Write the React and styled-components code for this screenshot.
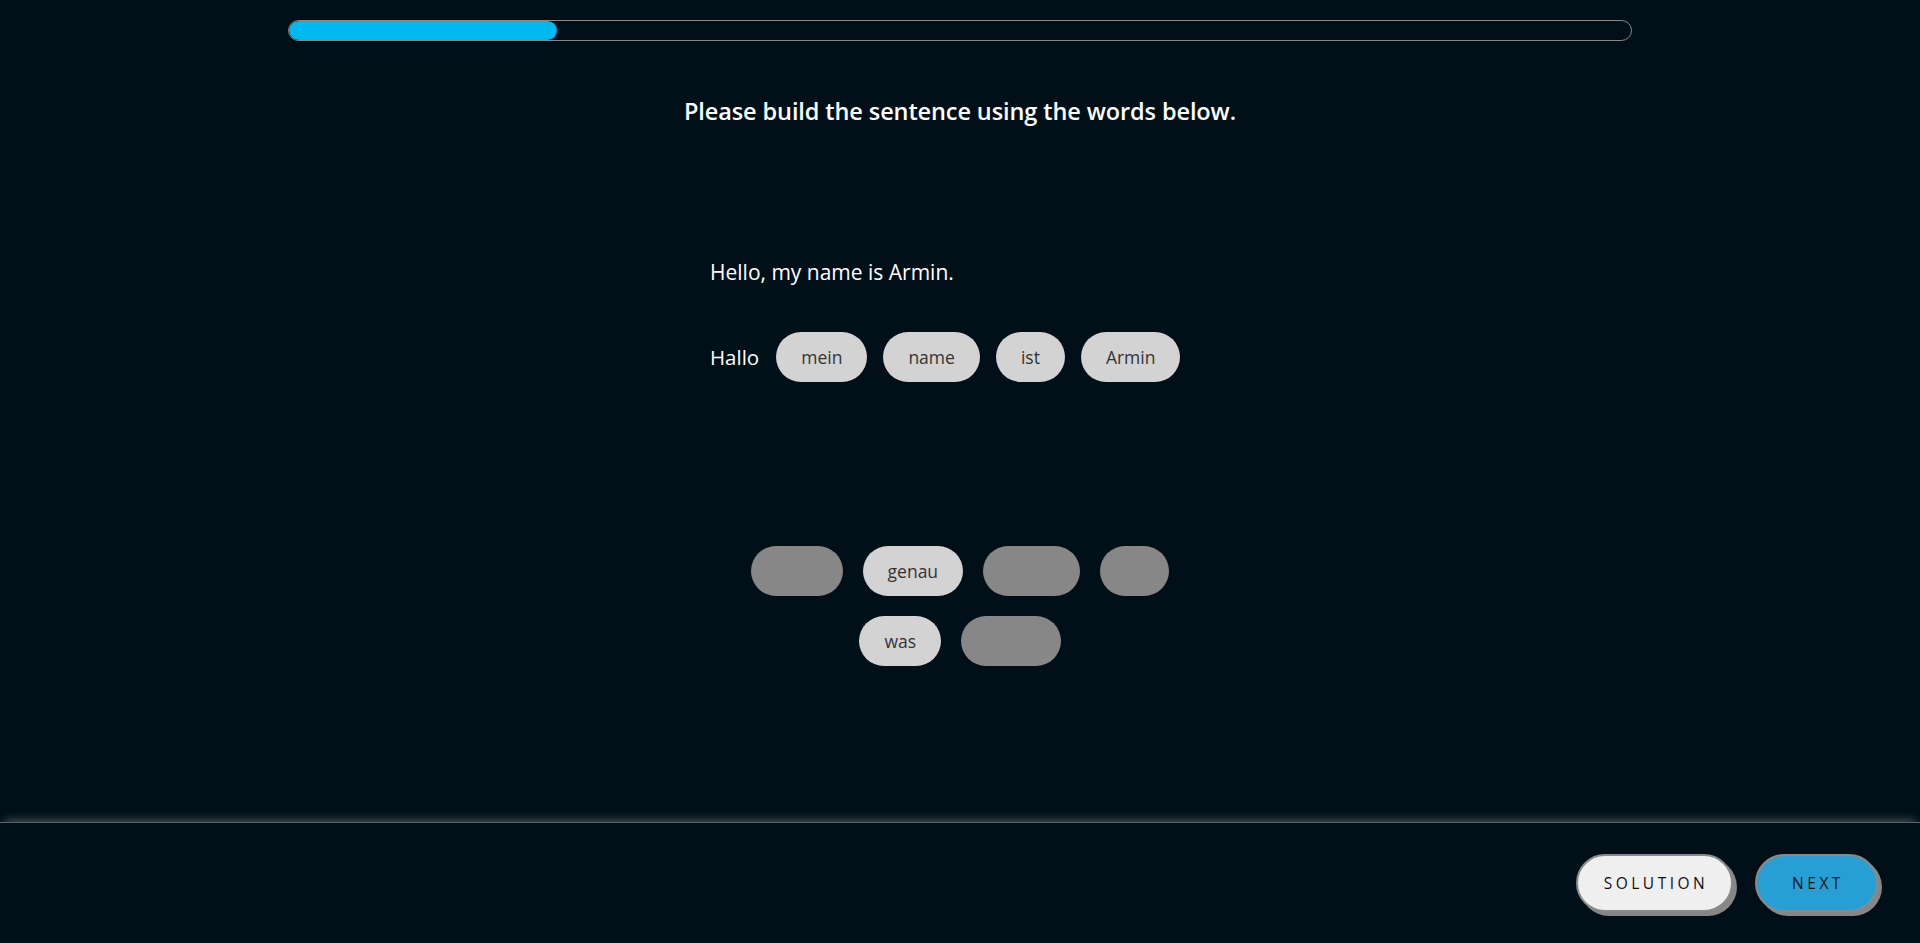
import React from "react";
import styled, { createGlobalStyle } from "styled-components";

const GlobalStyle = createGlobalStyle`
  body {
    margin: 0;
    background-color: #010f18;
    font-family: "Open Sans", "Liberation Sans", sans-serif;
    color: #ffffff;
  }
`;

const placed = ["mein", "name", "ist", "Armin"];

// word bank: hidden ones are already used in the sentence
const bank = [
  { word: "mein", used: true },
  { word: "genau", used: false },
  { word: "name", used: true },
  { word: "ist", used: true },
  { word: "was", used: false },
  { word: "Armin", used: true },
];

const App = () => {
  const progress = 20;

  return (
    <Page>
      <GlobalStyle />
      <Main>
        <ProgressTrack>
          <ProgressFill style={{ width: `${progress}%` }} />
        </ProgressTrack>

        <Title>Please build the sentence using the words below.</Title>

        <SentenceBox>
          <Original>Hello, my name is Armin.</Original>
          <BuildRow>
            <FixedWord>Hallo</FixedWord>
            {placed.map((w) => (
              <WordChip key={w}>{w}</WordChip>
            ))}
          </BuildRow>
        </SentenceBox>

        <WordBank>
          {bank.map((item) => (
            <BankChip key={item.word} $used={item.used}>
              {item.word}
            </BankChip>
          ))}
        </WordBank>
      </Main>

      <Footer>
        <ActionButton $variant="light" $width={157}>
          SOLUTION
        </ActionButton>
        <ActionButton $variant="blue" $width={123}>
          NEXT
        </ActionButton>
      </Footer>
    </Page>
  );
};

export default App;

// styled-components
const Page = styled.div`
  height: 100vh;
  display: flex;
  flex-direction: column;
`;

const Main = styled.div`
  flex: 1;
  display: flex;
  flex-direction: column;
  align-items: center;
`;

const ProgressTrack = styled.div`
  width: 70%;
  height: 21px;
  margin-top: 20px;
  box-sizing: border-box;
  border: 1px solid #8a8a8a;
  border-radius: 11px;
  overflow: hidden;
`;

const ProgressFill = styled.div`
  height: 100%;
  background-color: #00b9f1;
  border-radius: 11px;
`;

const Title = styled.h1`
  margin: 53px 0 0;
  font-size: 23.5px;
  line-height: 34px;
  font-weight: 600;
  letter-spacing: -0.1px;
`;

const SentenceBox = styled.div`
  width: 500px;
  margin-top: 129px;
  display: flex;
  flex-direction: column;
`;

const Original = styled.p`
  margin: 0;
  font-size: 21px;
  line-height: 30px;
`;

const BuildRow = styled.div`
  display: flex;
  align-items: center;
  gap: 16px;
  margin-top: 45px;
`;

const FixedWord = styled.span`
  font-size: 20.5px;
  margin-right: 1px;
`;

const WordChip = styled.div`
  height: 50px;
  padding: 0 25px;
  display: flex;
  align-items: center;
  border-radius: 25px;
  background-color: #d3d3d3;
  color: #333333;
  font-size: 17.5px;
`;

const WordBank = styled.div`
  width: 480px;
  margin-top: 154px;
  display: flex;
  flex-wrap: wrap;
  justify-content: center;
`;

const BankChip = styled(WordChip)`
  margin: 10px;
  background-color: ${({ $used }) => ($used ? "#878787" : "#d3d3d3")};
  color: ${({ $used }) => ($used ? "transparent" : "#333333")};
  user-select: none;
`;

const Footer = styled.div`
  height: 120px;
  flex-shrink: 0;
  display: flex;
  justify-content: flex-end;
  align-items: center;
  gap: 22px;
  padding-right: 42px;
  border-top: 1px solid #5b6268;
  box-shadow: 0 -7px 9px -5px rgba(210, 215, 220, 0.35);
`;

const ActionButton = styled.button`
  width: ${({ $width }) => $width}px;
  height: 58px;
  padding: 0 0 0 3px;
  border-radius: 29px;
  border: 2px solid #8a8a8a;
  box-shadow: 4px 4px 0 #868686;
  background-color: ${({ $variant }) =>
    $variant === "blue" ? "#279fd4" : "#efefef"};
  color: #111111;
  font-family: "Open Sans", "Liberation Sans", sans-serif;
  font-size: 15.5px;
  letter-spacing: 3.5px;
  cursor: pointer;
`;
